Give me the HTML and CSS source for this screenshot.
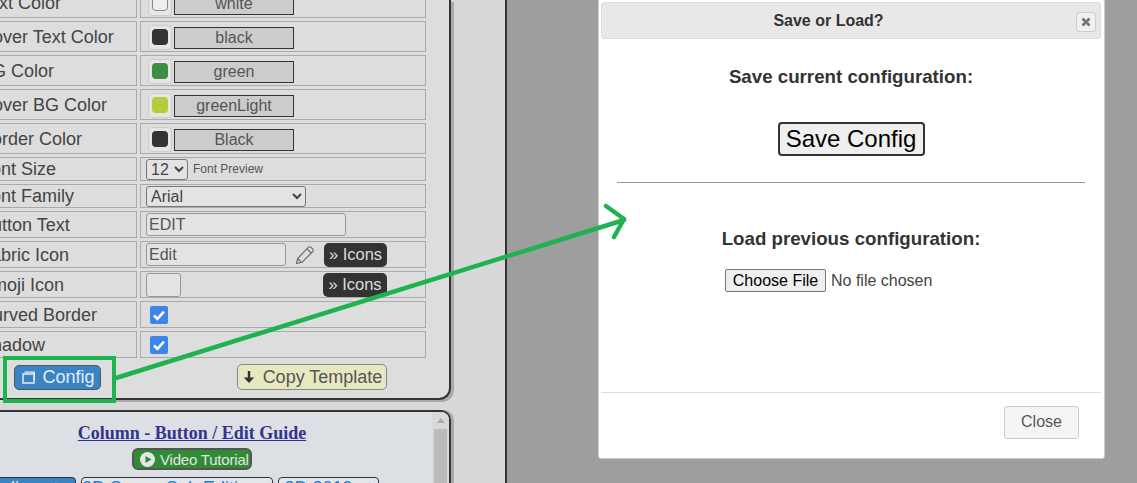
FILE: index.html
```html
<!DOCTYPE html>
<html lang="en">
<head>
<meta charset="utf-8">
<title>Save or Load?</title>
<link rel="stylesheet" href="styles.css">
</head>
<body>
<div class="page">
  <div class="sidebar">
    <div class="editor">
      <table class="props">
        <tr class="tall"><td class="lbl">Text Color</td><td><div class="color"><span class="well"><i class="swatch c-white"></i></span><span class="cbtn">white</span></div></td></tr>
        <tr class="tall"><td class="lbl">Hover Text Color</td><td><div class="color"><span class="well"><i class="swatch c-black"></i></span><span class="cbtn">black</span></div></td></tr>
        <tr class="tall"><td class="lbl">BG Color</td><td><div class="color"><span class="well"><i class="swatch c-green"></i></span><span class="cbtn">green</span></div></td></tr>
        <tr class="tall"><td class="lbl">Hover BG Color</td><td><div class="color"><span class="well"><i class="swatch c-light"></i></span><span class="cbtn">greenLight</span></div></td></tr>
        <tr class="tall"><td class="lbl">Border Color</td><td><div class="color"><span class="well"><i class="swatch c-black"></i></span><span class="cbtn">Black</span></div></td></tr>
        <tr class="r24"><td class="lbl">Font Size</td><td><div class="cell"><select class="sel sel-size"><option>12</option></select><span class="preview">Font Preview</span></div></td></tr>
        <tr class="r24"><td class="lbl">Font Family</td><td><div class="cell"><select class="sel sel-family"><option>Arial</option></select></div></td></tr>
        <tr class="r27"><td class="lbl">Button Text</td><td><div class="cell"><input class="txt w200" value="EDIT"></div></td></tr>
        <tr class="r27"><td class="lbl">Fabric Icon</td><td><div class="cell"><input class="txt w140" value="Edit">
          <svg class="pencil" viewBox="0 0 20 20" width="20" height="20"><path d="M1.500 18.500l1.200-5L13.500 2.200a1.600 1.600 0 0 1 2.300 0l2 2a1.600 1.600 0 0 1 0 2.300L7 17.300zM2.700 13.500l3.800 3.800M12 3.800l4.200 4.200" fill="none" stroke="#666" stroke-width="1.100" stroke-linejoin="round"/></svg>
          <span class="icons">» Icons</span></div></td></tr>
        <tr class="r27"><td class="lbl">Emoji Icon</td><td><div class="cell"><input class="txt w35"><span class="icons icons-end">» Icons</span></div></td></tr>
        <tr class="r27"><td class="lbl">Curved Border</td><td><div class="cell"><span class="check"><svg viewBox="0 0 18 18" width="18" height="18"><path d="M4 9.500l3.400 3.400L14 5.600" fill="none" stroke="#fff" stroke-width="2.600"/></svg></span></div></td></tr>
        <tr class="r27"><td class="lbl">Shadow</td><td><div class="cell"><span class="check"><svg viewBox="0 0 18 18" width="18" height="18"><path d="M4 9.500l3.400 3.400L14 5.600" fill="none" stroke="#fff" stroke-width="2.600"/></svg></span></div></td></tr>
      </table>
      <div class="actions">
        <span class="config"><svg viewBox="0 0 13 13" width="13" height="13"><path d="M1 3h11v9H1z" fill="none" stroke="#e8eef5" stroke-width="1.500"/><path d="M2.500 1.200h10v8" fill="none" stroke="#e8eef5" stroke-width="1.200"/></svg>Config</span>
        <span class="copy"><svg viewBox="0 0 14 14" width="14" height="14"><path d="M5.800 1h2.400v6.500h4L7 13 1.800 7.500h4z" fill="#333"/></svg>Copy Template</span>
      </div>
    </div>
    <div class="guide">
      <div class="guide-body">
        <a class="guide-title">Column - Button / Edit Guide</a>
        <div class="video-row"><span class="video"><svg viewBox="0 0 15 15" width="15" height="15"><circle cx="7.500" cy="7.500" r="7.500" fill="#e6e6e6"/><path d="M5.500 4l6 3.500-6 3.500z" fill="#2f8c35"/></svg>Video Tutorial</span></div>
        <div class="links"><span class="link on">Online ✓</span><span class="link w192">3D Scene Sub Edition ✓</span><span class="link w101">3D 2019 ✓</span></div>
      </div>
      <div class="scroll"><i class="arrow"></i><i class="thumb"></i></div>
    </div>
  </div>
  <div class="backdrop"></div>
</div>

<div class="modal">
  <div class="modal-head"><span class="modal-title">Save or Load?</span><span class="x"><svg viewBox="0 0 10 10" width="10" height="10"><path d="M1.500 1.500l7 7M8.500 1.500l-7 7" stroke="#777" stroke-width="2.800"/></svg></span></div>
  <div class="modal-body">
    <h3 class="h-save">Save current configuration:</h3>
    <div class="save-row"><button class="save">Save Config</button></div>
    <hr class="rule">
    <h3 class="h-load">Load previous configuration:</h3>
    <div class="file-row"><div class="file"><span class="choose">Choose File</span><span class="nofile">No file chosen</span></div></div>
  </div>
  <div class="modal-foot"><span class="close">Close</span></div>
</div>

<svg class="annot" width="1137" height="483" viewBox="0 0 1137 483">
  <rect x="5" y="358" width="109" height="43" fill="none" stroke="#1fb350" stroke-width="4"/>
  <path d="M116 378L624 220M606 206L624 219L614 237" fill="none" stroke="#1fb350" stroke-width="4.500" stroke-linecap="round" stroke-linejoin="round"/>
</svg>
</body>
</html>
```
FILE: styles.css
```css
* { box-sizing: border-box; }
html, body { margin: 0; height: 100%; overflow: hidden; }
body { font-family: "Liberation Sans", Arial, sans-serif; color: #444; background: #9e9e9e; }
.page { display: flex; height: 483px; overflow: hidden; }
.sidebar { width: 507px; flex: none; background: #d8d8d8; border-right: 2px solid #333; }
.backdrop { flex: 1; background: #9e9e9e; }

.editor { width: 451px; height: 400px; background: #ddd; border: solid #333; border-width: 0 2px 2px 0; border-bottom-right-radius: 12px; box-shadow: 3px 2px 0 #aaa; overflow: hidden; }
.props { border-collapse: separate; border-spacing: 3px; margin: -16px 0 0 -28px; width: 457px; table-layout: fixed; }
.props td { border: 1px solid #aaa; padding: 0; }
.props .lbl { width: 162px; font-size: 18px; color: #444; padding: 1px 0 0 4px; white-space: nowrap; }
.tall { height: 31px; }
.r24 { height: 24px; }
.r27 { height: 27px; }
.color, .cell { display: flex; align-items: center; }
.color { padding: 2px 0 0 7px; gap: 2px; }
.cell { padding-left: 5px; }
.well { width: 24px; height: 25px; background: #e6e6e6; border: 1px solid #ccc; border-radius: 4px; padding: 3px; display: block; }
.swatch { display: block; width: 16px; height: 16px; border-radius: 4px; }
.c-white { background: #eee; border: 1px solid #888; }
.c-black { background: #333; }
.c-green { background: #3f8d40; }
.c-light { background: #b5cc39; }
.cbtn { width: 120px; height: 22px; background: #ccc; border: 1px solid #333; font-size: 16px; line-height: 20px; text-align: center; color: #555; }
.sel { height: 21px; background: #e3e3e3; border: 1px solid #777; border-radius: 3px; font: 16px "Liberation Sans", Arial, sans-serif; color: #444; padding: 0; }
.sel-size { width: 42px; }
.sel-family { width: 160px; }
.preview { font-size: 12px; margin-left: 5px; color: #555; }
.txt { height: 23px; background: #e3e3e3; border: 1px solid #999; border-radius: 3px; font: 16px "Liberation Sans", Arial, sans-serif; color: #555; padding: 0 2px; }
.w200 { width: 200px; }
.w140 { width: 140px; }
.w35 { width: 35px; height: 24px; }
.pencil { margin-left: 9px; }
.icons { width: 63px; height: 24px; margin-left: 9px; background: #333; color: #ddd; border-radius: 5px; font-size: 16.500px; line-height: 23px; text-align: center; }
.icons-end { margin-left: 142px; width: 64px; }
.check { display: block; width: 18px; height: 18px; margin-left: 4px; background: #3b86e8; border-radius: 2px; }
.check svg { display: block; }

.actions { display: flex; align-items: center; justify-content: space-between; padding: 3px 62px 0 14px; }
.config, .copy { display: flex; align-items: center; font-size: 18px; }
.config { width: 87px; height: 25px; padding-left: 2px; background: #3a84c3; border: 1px solid #555; border-radius: 5px; color: #e4ecf4; justify-content: center; gap: 7px; }
.copy { width: 150px; height: 26px; background: #e8e8c0; border: 1px solid #888; border-radius: 5px; color: #555; justify-content: center; gap: 7px; }

.guide { display: flex; width: 451px; height: 90px; margin-top: 10px; background: #dce0e5; border: solid #333; border-width: 2px 2px 0 0; border-top-right-radius: 10px; box-shadow: 3px 0 0 #aaa; overflow: hidden; }
.guide-body { flex: 1; text-align: center; padding: 11px 0 0; }
.guide-title { font: bold 18px "Liberation Serif", "Times New Roman", serif; color: #33338f; text-decoration: underline; display: block; width: 384px; line-height: 20px; }
.video-row { width: 384px; margin-top: 5px; display: flex; justify-content: center; }
.video { display: flex; align-items: center; gap: 5px; width: 120px; height: 22px; padding-left: 6px; background: #2f8c35; border: 2px solid #555; border-radius: 6px; color: #e4e4e4; font-size: 15px; letter-spacing: -0.2px; white-space: nowrap; }
.links { display: flex; gap: 5px; margin: 7px 0 0 -30px; width: 420px; }
.link { flex: none; height: 22px; border: 1px solid #333; border-radius: 4px; background: #e2e6ea; color: #2b78c5; font-size: 18px; line-height: 21px; text-align: center; white-space: nowrap; }
.link.on { width: 106px; background: #3a84c3; color: #e4ecf4; }
.w192 { width: 192px; }
.w101 { width: 101px; }
.scroll { width: 17px; flex: none; background: #d8d8d8; padding: 6px 2px 0; }
.arrow { display: block; width: 0; height: 0; margin: 0 auto; border: solid transparent; border-width: 0 4px 5px; border-bottom-color: #aaa; }
.thumb { display: block; height: 60px; margin-top: 6px; background: #bbb; }

.modal { position: absolute; left: 598px; top: -2px; width: 507px; height: 460.500px; background: #fff; border: 1px solid #ccc; border-radius: 3px; padding: 3px 3px 0 2px; color: #333; }
.modal-head { height: 37px; background: #e8e8e8; border: 1px solid #ddd; border-radius: 3px; display: flex; align-items: center; justify-content: center; position: relative; }
.modal-title { font-weight: bold; font-size: 16px; margin-right: 45px; }
.x { position: absolute; right: 4px; top: 9px; width: 20px; height: 20px; background: #f0f0f0; border: 1px solid #ccc; border-radius: 3px; display: flex; align-items: center; justify-content: center; }
.modal-body { height: 354px; border-bottom: 1px solid #ddd; text-align: center; }
h3 { margin: 0; font-size: 18.720px; line-height: 21px; font-weight: bold; color: #333; }
.h-save { padding-top: 27px; }
.save-row { margin-top: 35px; }
.save { width: 147px; height: 34px; padding: 0; background: #efefef; border: 2px solid #333; border-radius: 4px; font: 24px "Liberation Sans", Arial, sans-serif; color: #000; }
.rule { margin: 26px 16px 0; border: 0; border-top: 1px solid #999; }
.h-load { padding-top: 45px; }
.file-row { margin-top: 20px; display: flex; padding-left: 124px; }
.file { display: flex; align-items: center; }
.choose { width: 101px; height: 23px; background: #efefef; border: 1px solid #767676; border-radius: 2px; color: #000; font-size: 16px; line-height: 21px; }
.nofile { margin-left: 5px; font-size: 16px; color: #444; }
.modal-foot { display: flex; justify-content: flex-end; padding: 13px 22px 0; }
.close { width: 75px; height: 33px; background: #f5f5f5; border: 1px solid #ccc; border-radius: 3px; font-size: 16px; line-height: 30px; text-align: center; color: #555; }

.annot { position: absolute; left: 0; top: 0; pointer-events: none; }
```
